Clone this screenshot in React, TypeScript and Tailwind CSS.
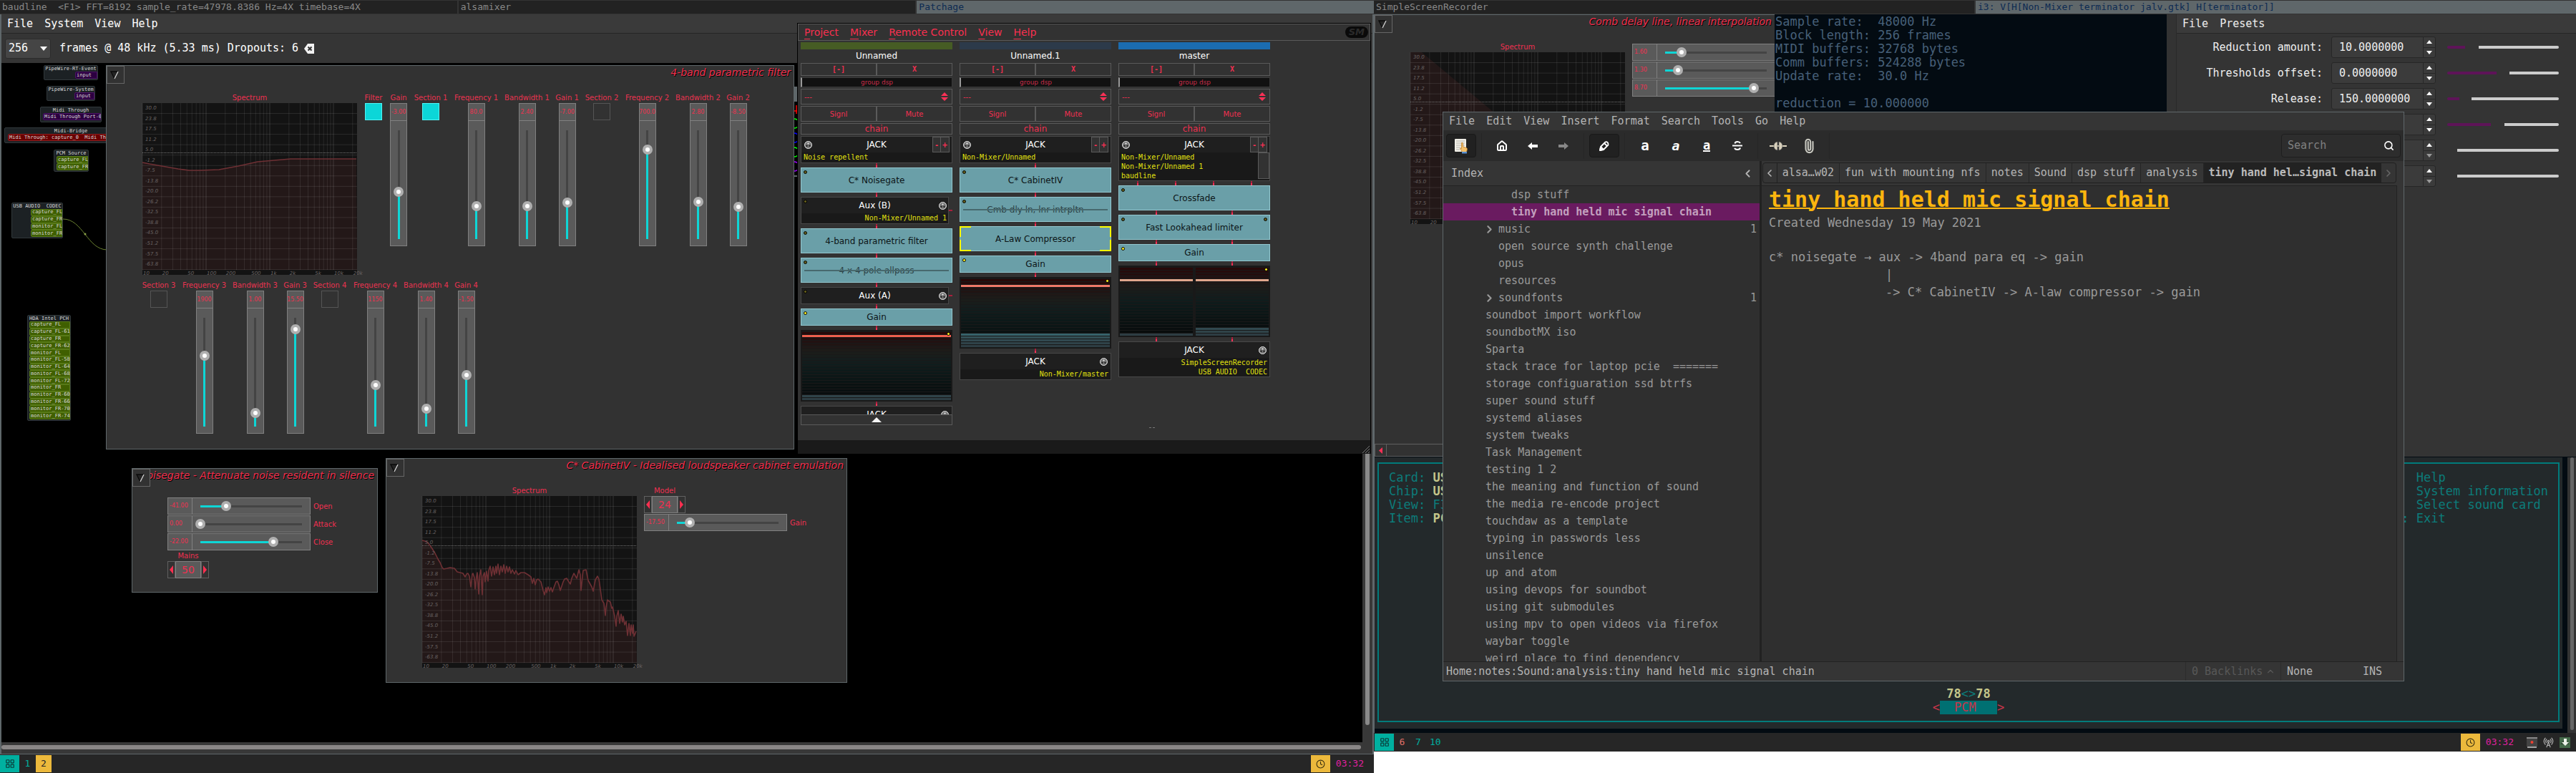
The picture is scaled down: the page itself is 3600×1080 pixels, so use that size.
import React from 'react';
import { Home, Pencil, Paperclip, Search, ChevronLeft, ChevronRight, ChevronUp, Clock, RadioTower, LayoutGrid } from 'lucide-react';

const MONO = "[font-family:'DejaVu_Sans_Mono',monospace]";
const SANS = "[font-family:'DejaVu_Sans',sans-serif]";

/* ---------- shared widgets ---------- */

function TitleTab({ text, active = false, grow }: { text: string; active?: boolean; grow: number }) {
  return (
    <div
      style={{ flexGrow: grow }}
      className={
        'basis-0 overflow-hidden whitespace-pre px-[3px] text-[13px] leading-[18px] ' +
        (active ? 'bg-[#5f676a] text-[#0c2a52]' : 'bg-[#222222] text-[#888888]')
      }
    >
      {text}
    </div>
  );
}

function Corner() {
  return (
    <button aria-label="Window menu" className="relative z-10 flex size-[25px] shrink-0 items-center justify-center border border-[#666666] bg-[#323232] pr-1">
      <svg width="12" height="12" viewBox="0 0 12 12">
        <path d="M1 1H11L6 11Z" fill="#242424" />
        <path d="M11 1H1L6 11" fill="none" stroke="#0a0a0a" strokeWidth="1.3" />
        <path d="M11 1L6 11" stroke="#d8d8d8" strokeWidth="1.3" />
      </svg>
    </button>
  );
}

function PluginHeader({ title }: { title: string }) {
  return (
    <div className="flex h-[25px]">
      <Corner />
      <div className="flex min-w-0 flex-1 justify-end pr-1">
        <h2 className="shrink-0 whitespace-nowrap text-[14px] italic leading-[18px] text-[#f0304e] [text-shadow:1px_1px_0_#000]">{title}</h2>
      </div>
    </div>
  );
}

const THUMB =
  '[&::-webkit-slider-thumb]:box-border [&::-webkit-slider-thumb]:size-[14px] [&::-webkit-slider-thumb]:appearance-none [&::-webkit-slider-thumb]:rounded-full [&::-webkit-slider-thumb]:border-4 [&::-webkit-slider-thumb]:border-[#afafaf] [&::-webkit-slider-thumb]:bg-white';

function HSlider({ value, pos, label, hidden = false }: { value: string; pos: number; label: string; hidden?: boolean }) {
  return (
    <label className="flex items-center gap-1 text-[10px] text-[#f03050]">
      <span className="flex h-6 w-[200px] shrink-0 border border-[#808080] bg-[#5a5a5a]">
        <span className="flex w-[34px] shrink-0 items-center border-r border-[#808080] pl-[2px] text-[8px]">{value}</span>
        <span className="flex flex-1 items-center justify-center">
          <input
            type="range"
            min={0}
            max={100}
            defaultValue={pos}
            style={{ backgroundImage: `linear-gradient(to right,#0ed6d6 ${pos}%,#444 ${pos}%)` }}
            className={'h-[14px] w-[156px] appearance-none bg-[length:142px_3px] bg-center bg-no-repeat ' + THUMB}
          />
        </span>
      </span>
      <span className={hidden ? 'sr-only' : ''}>{label}</span>
    </label>
  );
}

function VSlider({ label, value, pos, width }: { label: string; value: string; pos: number; width: string }) {
  return (
    <label className={'flex shrink-0 flex-col items-center text-[10px] text-[#ea3350] ' + width}>
      <span className="h-[14px] whitespace-nowrap leading-[14px]">{label}</span>
      <span className="flex h-[200px] w-6 flex-col border border-[#808080] bg-[#5a5a5a]">
        <span className="flex h-6 justify-center border-b border-[#808080] text-[8px] leading-[23px]">{value}</span>
        <span className="flex flex-1 items-center justify-center pt-[3px]">
          <input
            type="range"
            min={0}
            max={100}
            defaultValue={pos}
            style={{ backgroundImage: `linear-gradient(to top,#0ed6d6 ${pos}%,#444 ${pos}%)` }}
            className={'h-[166px] w-[14px] appearance-none bg-[length:3px_152px] bg-center bg-no-repeat [direction:rtl] [writing-mode:vertical-lr] ' + THUMB}
          />
        </span>
      </span>
    </label>
  );
}

function Toggle({ label, on = false, width }: { label: string; on?: boolean; width: string }) {
  return (
    <label className={'flex shrink-0 flex-col items-center text-[10px] text-[#ea3350] ' + width}>
      <span className="h-[14px] whitespace-nowrap leading-[14px]">{label}</span>
      <input type="checkbox" defaultChecked={on} className="size-6 appearance-none border border-[#555555] checked:border-[#50f5f5] checked:bg-[#0cd6d8]" />
    </label>
  );
}

function Stepper({ label, value }: { label: string; value: string }) {
  return (
    <div className="flex w-[58px] flex-col items-center text-[10px] text-[#f03050]">
      <span className="leading-[14px]">{label}</span>
      <div className="flex h-6 w-full">
        <button aria-label={label + ' down'} className="flex w-[11px] items-center justify-center border border-[#606060]">
          <svg width="5" height="12" viewBox="0 0 5 12"><path d="M5 0V12L0 6Z" fill="#ff2f50" /></svg>
        </button>
        <input aria-label={label} defaultValue={value} className="w-9 border border-[#808080] bg-[#5a5a5a] text-center text-[14px]" />
        <button aria-label={label + ' up'} className="flex w-[11px] items-center justify-center border border-[#606060]">
          <svg width="5" height="12" viewBox="0 0 5 12"><path d="M0 0V12L5 6Z" fill="#ff2f50" /></svg>
        </button>
      </div>
    </div>
  );
}

const DB = ['30.0', '23.8', '17.5', '11.2', '5.0', '-1.2', '-7.5', '-13.8', '-20.0', '-26.2', '-32.5', '-38.8', '-45.0', '-51.2', '-57.5', '-63.8'];
const HZ: [string, number][] = [['10', 10], ['20', 20], ['50', 50], ['100', 100], ['200', 200], ['500', 500], ['1k', 1000], ['2k', 2000], ['5k', 5000], ['10k', 10000], ['20k', 20000]];
const gx = (hz: number) => Math.log10(hz / 10) * 89;

function Spectrum({ line, stroke = true }: { line: string; stroke?: boolean }) {
  const verticals: number[] = [];
  for (const d of [10, 100, 1000, 10000]) for (let i = 1; i < 10; i++) if (d * i <= 20000) verticals.push(d * i);
  return (
    <figure className="w-[300px] shrink-0">
      <figcaption className="h-[14px] text-center text-[10px] leading-[14px] text-[#f03050]">Spectrum</figcaption>
      <svg width="300" height="240" viewBox="0 0 300 240" className={'overflow-visible ' + SANS}>
        <rect width="300" height="240" fill="#131313" />
        <path d={`M${line} L300,233 L0,233Z`} fill="#231818" />
        {verticals.map((v) => (
          <path key={v} d={`M${gx(v)} 0V233`} stroke="#fff" strokeOpacity={v === 100 || v === 1000 || v === 10000 ? 0.14 : 0.09} />
        ))}
        {DB.map((_, i) => (
          <path key={i} d={`M0 ${(i + 1) * 14.54}H300`} stroke="#fff" strokeOpacity=".1" />
        ))}
        <path d="M0 69.5H300" stroke="#777" strokeDasharray="1 1" />
        {stroke && <path d={`M${line}`} fill="none" stroke="#6e3034" strokeWidth="1.6" strokeLinejoin="round" />}
        <g fill="#6a6464" fontSize="7" fontStyle="italic">
          {DB.map((t, i) => <text key={t} x="4" y={9 + i * 14.54}>{t}</text>)}
          {HZ.map(([t, v]) => <text key={t} x={gx(v) + 1} y="240">{t}</text>)}
        </g>
      </svg>
    </figure>
  );
}

/* ---------- patchage ---------- */

type PortNode = { title: string; ports: string[]; box: string; portBox: string; color: string };

const GREEN = 'bg-[#3f5f00] border-[#587a18]';
const PURPLE = 'bg-[#2c0040] border-[#4c1466]';
const NODES: PortNode[] = [
  { title: 'PipeWire-RT-Event', ports: ['input'], box: 'left-[61px] top-[91px] w-[76px] h-[21px]', portBox: 'ml-[43px] h-[10px]', color: PURPLE },
  { title: 'PipeWire-System', ports: ['input'], box: 'left-[65px] top-[120px] w-[68px] h-[21px]', portBox: 'ml-[38px] h-[10px]', color: PURPLE },
  { title: 'Midi Through', ports: ['Midi Through Port-0'], box: 'left-[56px] top-[149px] w-[86px] h-[22px]', portBox: 'ml-[3px] h-[10px]', color: PURPLE },
  { title: 'Midi-Bridge', ports: ['Midi Through: capture_0  Midi Through: playback_0'], box: 'left-[6px] top-[178px] w-[186px] h-[22px]', portBox: 'ml-1 h-[10px]', color: 'bg-[#6a0000] border-[#8c1c1c]' },
  { title: 'PCM Source', ports: ['capture_FL', 'capture_FR'], box: 'left-[75px] top-[209px] w-[49px] h-[31px]', portBox: 'ml-[3px] h-5', color: GREEN },
  { title: 'USB AUDIO  CODEC', ports: ['capture_FL', 'capture_FR', 'monitor_FL', 'monitor_FR'], box: 'left-[16px] top-[283px] w-[72px] h-[50px]', portBox: 'ml-[26px] h-[39px]', color: GREEN },
  {
    title: 'HDA Intel PCH',
    ports: ['capture_FL', 'capture_FL-61', 'capture_FR', 'capture_FR-62', 'monitor_FL', 'monitor_FL-58', 'monitor_FL-64', 'monitor_FL-68', 'monitor_FL-72', 'monitor_FR', 'monitor_FR-60', 'monitor_FR-66', 'monitor_FR-70', 'monitor_FR-74'],
    box: 'left-[38px] top-[440px] w-[61px] h-[148px]',
    portBox: 'ml-[2px] h-[137px]',
    color: GREEN,
  },
];

function Node({ n }: { n: PortNode }) {
  return (
    <div className={'absolute overflow-hidden rounded-[2px] border border-[#31383b] bg-[#1c2124] text-[7px] text-[#d8d8d8] ' + n.box}>
      <div className="h-2 whitespace-pre text-center leading-[8px]">{n.title}</div>
      <div className={'flex flex-col ' + n.portBox}>
        {n.ports.map((p) => (
          <div key={p} className={'flex flex-1 items-center whitespace-pre rounded-l-[2px] border pl-px leading-[7px] ' + n.color}>{p}</div>
        ))}
      </div>
    </div>
  );
}

function Patchage() {
  return (
    <section className="flex min-h-0 flex-1 flex-col border-x-2 border-b border-[#5f676a] bg-[#353535]">
      <nav className="flex h-[27px] shrink-0 items-center gap-4 border-b border-[#252525] bg-[#3a3a3a] pl-2 text-[15px] text-white">
        {['File', 'System', 'View', 'Help'].map((m) => <button key={m}>{m}</button>)}
      </nav>
      <div className="flex h-[41px] shrink-0 items-center pl-[5px] text-[15px] text-white">
        <div className="relative">
          <select aria-label="Buffer size" className="block h-7 w-16 appearance-none rounded-[3px] border border-[#2c2c2c] bg-[#454545] pl-1">
            <option>256</option>
          </select>
          <svg className="pointer-events-none absolute right-[5px] top-[11px]" width="10" height="6"><path d="M0 0H10L5 6Z" fill="#fff" /></svg>
        </div>
        <span className="ml-3">frames @ 48 kHz (5.33 ms) Dropouts: 6</span>
        <button aria-label="Clear dropouts" className="ml-2">
          <svg width="14" height="14" viewBox="0 0 14 14"><path d="M5 0H14V14H5L0 7Z" fill="#f2f2f2" /><path d="M5.500 4.500L10.500 9.500M10.500 4.500L5.500 9.500" stroke="#333" strokeWidth="2" /></svg>
        </button>
      </div>
      <div className="flex min-h-0 flex-1">
        <div className="flex-1 bg-black" />
        <div className="flex w-[14px] justify-center bg-[#383838] pb-6"><div className="w-[6px] rounded-full bg-[#8a8a8a]" /></div>
      </div>
      <div className="flex h-4 shrink-0 flex-col bg-[#383838] pr-4 pt-1"><div className="h-[6px] rounded-full bg-[#8a8787]" /></div>
    </section>
  );
}

/* ---------- non mixer ---------- */

function Links({ n }: { n: number }) {
  return (
    <div className="flex h-[6px] shrink-0 justify-around">
      {Array.from({ length: n }, (_, i) => <span key={i} className="w-[2px] border-t-[3px] border-[#a8203c] bg-[#ff3056]" />)}
    </div>
  );
}

function Jackplug() {
  return (
    <svg width="11" height="11" viewBox="0 0 11 11" className="block shrink-0">
      <circle cx="5.500" cy="5.500" r="5" fill="#777" stroke="#e8e8e8" />
      <circle cx="5.500" cy="3.500" r="1.100" fill="#eee" />
      <circle cx="3.500" cy="6.800" r="1.200" fill="#222" />
      <circle cx="7.500" cy="6.800" r="1.200" fill="#222" />
    </svg>
  );
}

function Led({ on = false, side = 'left' }: { on?: boolean; side?: 'left' | 'right' }) {
  return <i className={'absolute top-[3px] size-[5px] rounded-full border border-black ' + (side === 'left' ? 'left-[3px] ' : 'right-[3px] ') + (on ? 'bg-[#ffee20]' : 'bg-[#66601c]')} />;
}

function Jack({ lines, input = false, scroll = false }: { lines: string[]; input?: boolean; scroll?: boolean }) {
  return (
    <div className="relative min-h-[38px] shrink-0 border border-[#484848] bg-[#191919]">
      <div className="relative flex h-[22px] items-center justify-center bg-[#1f1f1f] text-[12px] text-white">
        {input ? (
          <>
            <span className="absolute left-1"><Jackplug /></span>
            <span className="absolute right-[3px] flex font-bold text-[#ff3056]">
              <button className="h-[22px] w-3 border border-[#5a5a5a] bg-[#323232] text-[10px]">-</button>
              <button className="h-[22px] w-3 border border-l-0 border-[#5a5a5a] bg-[#323232] text-[10px]">+</button>
            </span>
          </>
        ) : (
          <span className="absolute right-1"><Jackplug /></span>
        )}
        JACK
      </div>
      <div className={'flex ' + MONO}>
        <div className={'flex-1 whitespace-pre px-[3px] text-[10px] leading-[13px] text-[#e0e010] ' + (input ? '' : 'text-right')}>
          {lines.map((l) => <div key={l}>{l}</div>)}
        </div>
        {scroll && <div className="h-[37px] w-4 border border-[#5a5a5a] bg-[#323232]" />}
      </div>
    </div>
  );
}

function Aux({ name, line }: { name: string; line?: string }) {
  return (
    <div className="flex items-center">
      <div className={'relative w-[207px] shrink-0 border border-[#484848] bg-[#191919] ' + (line ? 'h-[38px]' : 'h-6')}>
        <div className="flex h-[22px] items-center justify-center bg-[#1f1f1f] text-[12px] text-white">{name}</div>
        <Led />
        <span className="absolute right-[2px] top-[6px]"><Jackplug /></span>
        {line && <div className={'pr-[2px] text-right text-[10px] leading-[13px] text-[#e0e010] ' + MONO}>{line}</div>}
      </div>
      <span className="h-[2px] flex-1 bg-[#a8203c]" />
    </div>
  );
}

function Mod({ name, short = false, on = false, bypass = false, selected = false, both = false }: { name: string; short?: boolean; on?: boolean; bypass?: boolean; selected?: boolean; both?: boolean }) {
  return (
    <div className={'relative flex shrink-0 items-center justify-center border border-[#93c8d0] bg-[#6a9fa8] text-[12px] ' + (short ? 'h-6 ' : 'h-[35px] ') + (bypass ? 'text-[#2c4246]' : 'text-[#0c1416]')}>
      {!selected && <Led on={on} />}
      {both && <Led side="right" />}
      {name}
      {bypass && <span className="absolute inset-x-1 top-4 h-[2px] bg-[#47696e]" />}
      {selected && (
        <>
          <i className="absolute -left-px -top-px h-[15px] w-4 border-l-2 border-t-2 border-[#ffff00]" />
          <i className="absolute -right-px -top-px h-[15px] w-4 border-r-2 border-t-2 border-[#ffff00]" />
          <i className="absolute -bottom-px -left-px h-4 w-4 border-b-2 border-l-2 border-[#ffff00]" />
          <i className="absolute -bottom-px -right-px h-4 w-4 border-b-2 border-r-2 border-[#ffff00]" />
        </>
      )}
    </div>
  );
}

const SEG = ['#280909', '#260b0b', '#240d0d', '#221111', '#201413', '#1f1816', '#1e1b18', '#1b1d1a', '#181d1b', '#151d1d', '#121d1d', '#101d1d', '#0e1b1b', '#0d1a1a', '#0c1919', '#0c1717', '#0b1616', '#0a1414', '#0a1212', '#091111', '#090f10', '#080d0e', '#080c0c', '#070a0a'];
const LIT = ['#2d3d43', '#2f4349', '#314950', '#335056', '#36626a'];

function Meter({ bars, peak, color }: { bars: number[]; peak: number; color: string }) {
  return (
    <div className="relative flex h-[100px] shrink-0 gap-1 bg-[#191919] px-[2px] pb-[1px] pt-[3px]">
      {bars.map((lit, b) => (
        <div key={b} className="flex flex-1 flex-col gap-px">
          {SEG.map((c, i) => (
            <span key={i} className="h-[3px]" style={{ backgroundColor: i === peak ? color : i >= 24 - lit ? LIT[23 - i] : c }} />
          ))}
        </div>
      ))}
      <Led on side="right" />
    </div>
  );
}

function Strip({ name, color, children }: { name: string; color: string; children: React.ReactNode }) {
  return (
    <div className="w-[212px] shrink-0 text-[#f03050]">
      <div className={'h-[10px] ' + color} />
      <div className="h-[19px] text-center text-[12px] leading-[19px] text-white">{name}</div>
      <div className={'flex text-[10px] font-bold leading-[16px] ' + MONO}>
        <button className="h-[18px] flex-1 border border-[#5a5a5a]">[-]</button>
        <button className="h-[18px] flex-1 border border-[#5a5a5a]">X</button>
      </div>
      <div className="mt-[2px] h-[14px] border border-l-2 border-[#3a3a3a] border-l-[#999999] bg-[#111111] text-center text-[9px] leading-[12px] text-[#c82c48]">group dsp</div>
      <div className="relative mt-[2px]">
        <select aria-label={name + ' group'} className="block h-[22px] w-full appearance-none border border-[#5a5a5a] bg-[#323232] pl-1 text-[10px]">
          <option>---</option>
        </select>
        <svg className="pointer-events-none absolute right-[6px] top-[5px]" width="10" height="12"><path d="M0 5L5 0L10 5ZM0 7L5 12L10 7Z" fill="#ff3056" /></svg>
      </div>
      <div className="mt-[2px] flex text-[10px]">
        <button className="h-[22px] flex-1 border border-[#5a5a5a]">Signl</button>
        <button className="h-[22px] flex-1 border border-[#5a5a5a]">Mute</button>
      </div>
      <button className="mb-[2px] mt-[2px] block h-4 w-full border border-[#5a5a5a] text-[12px] leading-[14px]">chain</button>
      {children}
    </div>
  );
}

function NonMixer() {
  return (
    <section className={'absolute left-[1114px] right-[4px] top-[32px] flex h-[602px] flex-col border border-b-0 border-black bg-[#323232] ' + SANS}>
      <nav className="flex h-6 shrink-0 items-center gap-4 border border-[#5a5a5a] pl-2 pr-[2px] text-[14px] text-[#f8304f]">
        {['Project', 'Mixer', 'Remote Control', 'View', 'Help'].map((m) => (
          <button key={m}><u className="underline-offset-4">{m[0]}</u>{m.slice(1)}</button>
        ))}
        <span className="ml-auto rounded-full bg-[#0a0a0a] px-[5px] text-[13px] font-bold italic leading-4 text-[#2b2b2b]">SM</span>
      </nav>
      <div className="flex min-h-0 flex-1 gap-[10px] pl-1 pt-[2px]">
        <Strip name="Unnamed" color="bg-[#465c24]">
          <Jack input lines={['Noise repellent']} />
          <Links n={1} />
          <Mod name="C* Noisegate" />
          <Links n={1} />
          <Aux name="Aux (B)" line="Non-Mixer/Unnamed 1" />
          <Links n={1} />
          <Mod name="4-band parametric filter" />
          <Links n={1} />
          <Mod name="4 x 4 pole allpass" bypass />
          <Links n={1} />
          <Aux name="Aux (A)" />
          <Links n={1} />
          <Mod name="Gain" short on />
          <Links n={1} />
          <Meter bars={[2]} peak={1} color="#f0604e" />
          <Links n={1} />
          <div className="h-3 overflow-hidden"><Jack lines={['Non-Mixer/master']} /></div>
          <button aria-label="Scroll up" className="flex h-[15px] w-full items-center justify-center border border-[#5a5a5a]">
            <svg width="14" height="7"><path d="M0 7H14L7 0Z" fill="#f4f4f4" /></svg>
          </button>
        </Strip>
        <Strip name="Unnamed.1" color="bg-[#2c3a4a]">
          <Jack input lines={['Non-Mixer/Unnamed']} />
          <Links n={1} />
          <Mod name="C* CabinetIV" />
          <Links n={1} />
          <Mod name="Cmb dly ln, lnr intrpltn" bypass />
          <Links n={1} />
          <Mod name="A-Law Compressor" selected />
          <Links n={1} />
          <Mod name="Gain" short on />
          <Links n={1} />
          <Meter bars={[5]} peak={2} color="#f07868" />
          <Links n={1} />
          <Jack lines={['Non-Mixer/master']} />
        </Strip>
        <Strip name="master" color="bg-[#1b6cb0]">
          <Jack input scroll lines={['Non-Mixer/Unnamed', 'Non-Mixer/Unnamed 1', 'baudline']} />
          <Links n={4} />
          <Mod name="Crossfade" />
          <Links n={2} />
          <Mod name="Fast Lookahead limiter" both />
          <Links n={2} />
          <Mod name="Gain" short on />
          <Links n={2} />
          <Meter bars={[1, 3]} peak={4} color="#e0a68c" />
          <Links n={2} />
          <Jack lines={['SimpleScreenRecorder', 'USB AUDIO  CODEC']} />
        </Strip>
      </div>
      <div className="flex h-[19px] shrink-0 items-end justify-end bg-[#1a1a1a] p-px">
        <svg width="10" height="10"><path d="M0 10L10 0M4 10L10 4M8 10L10 8" stroke="#777" /></svg>
      </div>
      <i className="absolute bottom-9 left-[491px] h-px w-2 border-x-[3px] border-[#777777]" />
    </section>
  );
}

/* ---------- left plugin windows ---------- */

function ParametricWindow() {
  return (
    <section className={'absolute left-[148px] top-[91px] h-[537px] w-[962px] border border-[#5f676a] bg-[#323232] ' + SANS}>
      <PluginHeader title="4-band parametric filter" />
      <div className="mt-[13px] flex gap-[10px] pl-[50px]">
        <Spectrum line="0,83 10,85 27,88 50,92 65,94 80,94 107,93 134,88 161,82 184,80 207,78 230,78 299,78" />
        <div className="flex gap-[10px]">
          <Toggle label="Filter" on width="w-[26px]" />
          <VSlider label="Gain" value="-3.00" pos={43} width="w-6" />
          <Toggle label="Section 1" on width="w-[46px]" />
          <VSlider label="Frequency 1" value="80.0" pos={30} width="w-[61px]" />
          <VSlider label="Bandwidth 1" value="2.40" pos={30} width="w-[61px]" />
          <VSlider label="Gain 1" value="-7.00" pos={33} width="w-[31px]" />
          <Toggle label="Section 2" width="w-[46px]" />
          <VSlider label="Frequency 2" value="700.0" pos={82} width="w-[61px]" />
          <VSlider label="Bandwidth 2" value="2.80" pos={34} width="w-[61px]" />
          <VSlider label="Gain 2" value="-8.50" pos={29} width="w-[31px]" />
        </div>
      </div>
      <div className="mt-2 flex gap-[10px] pl-[50px]">
        <Toggle label="Section 3" width="w-[46px]" />
        <VSlider label="Frequency 3" value="1900" pos={65} width="w-[61px]" />
        <VSlider label="Bandwidth 3" value="1.00" pos={12} width="w-[61px]" />
        <VSlider label="Gain 3" value="15.50" pos={89} width="w-[31px]" />
        <Toggle label="Section 4" width="w-[46px]" />
        <VSlider label="Frequency 4" value="1150" pos={38} width="w-[61px]" />
        <VSlider label="Bandwidth 4" value="1.40" pos={16} width="w-[61px]" />
        <VSlider label="Gain 4" value="-1.50" pos={47} width="w-[31px]" />
      </div>
    </section>
  );
}

function NoisegateWindow() {
  return (
    <section className={'absolute left-[184px] top-[654px] h-[174px] w-[344px] overflow-hidden border border-[#5f676a] bg-[#323232] ' + SANS}>
      <PluginHeader title="C* Noisegate - Attenuate noise resident in silence" />
      <div className="mt-[15px] flex flex-col gap-px pl-[49px]">
        <HSlider value="-41.00" pos={25} label="Open" />
        <HSlider value="0.00" pos={0} label="Attack" />
        <HSlider value="-22.00" pos={72} label="Close" />
        <Stepper label="Mains" value="50" />
      </div>
    </section>
  );
}

const CAB =
  '0,62 4,63 8,65 13,72 18,80 22,88 25,93 28,100 30,102 35,101 39,100 45,101 49,106 53,107 57,108 60,113 62,109 64,108 66,112 68,127 70,109 71,108 73,114 74,130 76,112 77,107 79,137 80,112 82,103 84,138 85,112 87,107 88,120 90,105 92,119 93,104 95,98 97,112 99,99 101,110 103,98 104,108 106,95 108,110 110,98 112,106 114,96 116,108 118,98 120,106 122,99 124,108 126,103 129,109 131,104 134,110 138,107 143,107 148,110 152,113 154,122 156,115 158,124 160,117 162,116 166,120 169,132 171,138 173,128 174,135 176,127 178,133 180,128 182,134 184,128 187,120 189,119 191,124 193,132 195,126 197,120 199,116 202,115 205,120 207,123 209,115 212,108 216,115 219,103 221,110 222,132 224,112 225,104 229,103 232,118 237,127 239,133 242,117 245,112 247,116 249,130 251,145 254,150 256,167 257,155 259,145 261,147 263,148 265,157 266,155 269,168 271,182 272,168 274,160 276,178 278,165 280,176 281,168 283,180 285,175 287,195 289,178 291,195 292,180 294,192 295,180 296,196 299,189';

function CabinetWindow() {
  return (
    <section className={'absolute left-[539px] top-[640px] h-[314px] w-[645px] border border-[#5f676a] bg-[#323232] ' + SANS}>
      <PluginHeader title="C* CabinetIV - Idealised loudspeaker cabinet emulation" />
      <div className="mt-[13px] flex gap-[10px] pl-[50px]">
        <Spectrum line={CAB} />
        <div className="flex flex-col gap-px">
          <Stepper label="Model" value="24" />
          <HSlider value="-17.50" pos={13} label="Gain" />
        </div>
      </div>
    </section>
  );
}

function BaudlineWindow() {
  return (
    <section aria-label="baudline" className="absolute left-[1000px] top-[121px] h-[126px] w-[114px] border-b-2 border-[#5f676a] bg-black">
      <div className="h-[21px] bg-[#5f676a]" />
      <svg className="ml-auto" width="12" height="102" viewBox="0 0 12 102" fill="none" strokeWidth="1.500">
        <path d="M11 5V17M7 13H12" stroke="#f00" />
        <path d="M8 24A6 6 0 0 1 8 37" stroke="#0f0" />
        <path d="M8 44A6 6 0 0 1 8 57" stroke="#00f" />
        <path d="M8 64A6 6 0 0 1 8 77" stroke="#0f0" />
        <path d="M8 84A6 6 0 0 1 8 97" stroke="#a000ff" />
      </svg>
    </section>
  );
}

function GridBadge() {
  return <span className="flex h-6 w-[27px] items-center justify-center bg-[#00b0a0] text-[#0b3a38]"><LayoutGrid size={14} strokeWidth={2} /></span>;
}

function ClockBadge() {
  return (
    <>
      <span className="flex h-6 w-[27px] items-center justify-center bg-[#ecb93c] text-[#3a3010]"><Clock size={13} /></span>
      <span className="ml-2 text-[#e020a0]">03:32</span>
    </>
  );
}

function LeftMonitor() {
  return (
    <div className="relative flex h-screen min-w-0 flex-col overflow-hidden bg-black">
      <header className="flex h-5 shrink-0 gap-[2px] bg-[#333333] py-px">
        <TitleTab grow={1} text="baudline  <F1> FFT=8192 sample_rate=47978.8386 Hz=4X timebase=4X" />
        <TitleTab grow={1} text="alsamixer" />
        <TitleTab grow={1} text="Patchage" active />
      </header>
      <Patchage />
      <footer className="flex h-[26px] shrink-0 items-center bg-[#262626] text-[13px] text-[#00b0a0]">
        <GridBadge />
        <button className="w-[23px]">1</button>
        <button className="h-6 w-[22px] bg-[#ecb93c] text-[#262626]">2</button>
        <span className="ml-auto flex items-center pr-[14px]"><ClockBadge /></span>
      </footer>
      {NODES.map((n) => <Node key={n.title} n={n} />)}
      <svg className="absolute left-[88px] top-[300px]" width="60" height="52" fill="none">
        <path d="M0 6C28 6 34 49 62 49" stroke="#6a8030" />
        <circle cx="31" cy="27" r="1.500" fill="#8aa048" />
      </svg>
      <BaudlineWindow />
      <ParametricWindow />
      <NonMixer />
      <NoisegateWindow />
      <CabinetWindow />
    </div>
  );
}

/* ---------- right monitor ---------- */

function CombPane() {
  return (
    <section className={'flex w-[560px] shrink-0 flex-col overflow-hidden border-l border-t border-[#5f676a] bg-[#323232] ' + SANS}>
      <PluginHeader title="Comb delay line, linear interpolation" />
      <div className="mt-[13px] flex flex-1 gap-[10px] pl-[50px]">
        <Spectrum stroke={false} line="0,0 16,0 285,224" />
        <div className="flex flex-col gap-px pt-[2px]">
          <HSlider value="1.60" pos={16} label="Delay time" hidden />
          <HSlider value="1.30" pos={13} label="Delay offset" hidden />
          <HSlider value="8.70" pos={87} label="Decay" hidden />
        </div>
      </div>
      <div className="flex h-[18px] shrink-0 border border-[#606060]">
        <button aria-label="Scroll left" className="flex w-4 items-center justify-center border-r border-[#606060]">
          <svg width="5" height="9"><path d="M5 0V9L0 4.500Z" fill="#ff3056" /></svg>
        </button>
      </div>
    </section>
  );
}

const PARAMS = [
  { label: 'Reduction amount:', value: '10.0000000', a: 16, b: 28 },
  { label: 'Thresholds offset:', value: '0.0000000', a: 44, b: 56 },
  { label: 'Release:', value: '150.0000000', a: 11, b: 22 },
  { label: 'Residual listen:', value: '', a: 39, b: 51 },
  { label: 'Makeup:', value: '', a: 0, b: 9 },
  { label: 'Enable:', value: '', a: 0, b: 9 },
];

function GtkPane() {
  return (
    <section className="flex min-w-0 flex-1 flex-col border-l border-[#2a2a2a] bg-[#343434] text-[15px] text-[#eeeeee]">
      <nav className="flex h-[27px] shrink-0 items-center gap-4 border-b border-[#262626] bg-[#3a3a3a] pl-2">
        <button>File</button>
        <button>Presets</button>
      </nav>
      <div className="flex flex-col gap-[6px] pr-6 pt-1">
        {PARAMS.map((p) => (
          <label key={p.label} className="flex h-[30px] items-center">
            <span className="w-[204px] shrink-0 text-right">{p.label}</span>
            <span className="ml-3 flex h-[30px] w-[146px] shrink-0 overflow-hidden rounded-[3px] border border-[#272727] bg-[#3b3b3b]">
              <input defaultValue={p.value} className="min-w-0 flex-1 pl-[10px]" />
              <span className="flex w-[17px] flex-col border-l border-[#272727]">
                <button aria-label="Increase" className="flex flex-1 items-center justify-center border-b border-[#272727]"><svg width="8" height="5"><path d="M0 5H8L4 0Z" fill="#fff" /></svg></button>
                <button aria-label="Decrease" className="flex flex-1 items-center justify-center"><svg width="8" height="5"><path d="M0 0H8L4 5Z" fill={p.a ? '#fff' : '#999'} /></svg></button>
              </span>
            </span>
            <input
              type="range"
              aria-label={p.label}
              defaultValue={p.a}
              style={{ backgroundImage: `linear-gradient(to right,#5e1458 ${p.a}%,transparent ${p.a}%,transparent ${p.b}%,#cccccc ${p.b}%)` }}
              className="ml-4 h-1 min-w-0 flex-1 appearance-none rounded-full [&::-webkit-slider-thumb]:size-4 [&::-webkit-slider-thumb]:appearance-none"
            />
          </label>
        ))}
      </div>
    </section>
  );
}

function Alsamixer() {
  return (
    <section className="flex min-h-0 flex-1 border-l border-[#5f676a] bg-[#030b12] pt-px text-[17px] leading-[19px] text-[#0c7c7a]">
      <div className="mb-[6px] mr-[7px] flex flex-1 bg-[#23292b] pb-[9px] pl-1 pr-1 pt-[7px]">
        <div className="flex flex-1 flex-col justify-between border-2 border-[#007b7b] pb-[9px] pl-[14px] pr-[14px] pt-[10px]">
          <div className="flex justify-between whitespace-pre">
            <pre className={MONO}>
              {'Card: '}<b className="text-[#c5c68a]">USB AUDIO  CODEC</b>{'\nChip: '}<b className="text-[#c5c68a]">USB Mixer</b>{'\nView: F3:[Playback] F4: Capture\nItem: '}<b className="text-[#c5c68a]">PCM</b>
            </pre>
            <pre className={MONO}>{'F1:  Help\nF2:  System information\nF6:  Select sound card\nEsc: Exit'}</pre>
          </div>
          <div className="flex flex-col items-center whitespace-pre">
            <div><b className="text-[#c5c68a]">78</b>{'<>'}<b className="text-[#c5c68a]">78</b></div>
            <div className="text-[#c8354a]">{'<'}<span className="inline-block w-20 bg-[#007072] pl-5">PCM</span>{'>'}</div>
          </div>
        </div>
      </div>
      <div className="flex w-3 justify-center bg-[#333333] pb-1"><div className="w-[5px] rounded-full bg-[#666666]" /></div>
    </section>
  );
}

const TREE: [string, number, string?][] = [
  ['dsp stuff', 2], ['tiny hand held mic signal chain', 3], ['music', 1, '1'], ['open source synth challenge', 1], ['opus', 1], ['resources', 1], ['soundfonts', 1, '1'],
  ['soundbot import workflow', 0], ['soundbotMX iso', 0], ['Sparta', 0], ['stack trace for laptop pcie  =======', 0], ['storage configuaration ssd btrfs', 0], ['super sound stuff', 0],
  ['systemd aliases', 0], ['system tweaks', 0], ['Task Management', 0], ['testing 1 2', 0], ['the meaning and function of sound', 0], ['the media re-encode project', 0],
  ['touchdaw as a template', 0], ['typing in passwords less', 0], ['unsilence', 0], ['up and atom', 0], ['using devops for soundbot', 0], ['using git submodules', 0],
  ['using mpv to open videos via firefox', 0], ['waybar toggle', 0], ['weird place to find dependency', 0],
];
const INDENT = ['pl-[59px]', 'pl-[77px]', 'pl-[95px]', 'pl-[95px] bg-[#6a1b60] font-bold text-[#c3a0be]'];

function Tool({ label, active = false, children }: { label: string; active?: boolean; children: React.ReactNode }) {
  return (
    <button aria-label={label} className={'flex h-[33px] w-[42px] shrink-0 items-center justify-center rounded-[4px] text-white ' + (active ? 'border border-[#191919] bg-[#212121]' : '')}>
      {children}
    </button>
  );
}

function Sep() {
  return <span className="mx-[6px] h-9 w-px shrink-0 bg-[#262626]" />;
}

function Zim() {
  return (
    <section className="absolute left-[96px] right-[240px] top-[156px] flex h-[796px] flex-col border border-[#5f676a] bg-[#353535] text-[15px] text-[#b4b4b4]">
      <nav className="flex h-[25px] shrink-0 items-center gap-4 pl-2">
        {['File', 'Edit', 'View', 'Insert', 'Format', 'Search', 'Tools', 'Go', 'Help'].map((m) => <button key={m}>{m}</button>)}
      </nav>
      <div className="flex h-[43px] shrink-0 items-center gap-px bg-[#2b2b2b] pl-1 pr-1">
        <Tool label="Edit mode" active>
          <svg width="20" height="22" viewBox="0 0 20 22">
            <rect x="1" y="1" width="16" height="18" rx="1" fill="#f0eee6" />
            <path d="M3 4H15M3 7H15M3 10H15M3 13H9M3 16H8" stroke="#b8b6ae" />
            <path d="M11 6q1.500 0 1.500 2v4l5 1.500q1 .5 1 2l-1 4h-6l-3-5q0-1.500 2 0V8q0-2 .5-2" fill="#f5c06a" stroke="#b87820" strokeWidth=".7" />
            <rect x="11" y="19" width="7" height="2.500" fill="#5a90d0" />
          </svg>
        </Tool>
        <Sep />
        <Tool label="Home"><Home size={16} strokeWidth={3} /></Tool>
        <Tool label="Back"><svg width="14" height="10"><path d="M0 5L6 0V3H14V7H6V10Z" fill="#fff" /></svg></Tool>
        <Tool label="Forward"><svg width="14" height="10"><path d="M14 5L8 0V3H0V7H8V10Z" fill="#888" /></svg></Tool>
        <Sep />
        <Tool label="Edit" active>
          <svg width="16" height="16" viewBox="0 0 16 16" fill="none" stroke="#fff" strokeWidth="1.800" strokeLinejoin="round">
            <path d="M2 14L3 9L9.500 2.500Q11 1.500 12.500 3T13.500 6.500L7 13Z" />
            <path d="M8 4L12 8M3 9L7 13" />
            <path d="M2 14L2.600 11L5 13.400Z" fill="#fff" />
          </svg>
        </Tool>
        <Sep />
        <Tool label="Strong"><b className="text-[19px] leading-none">a</b></Tool>
        <Tool label="Emphasis"><b className="text-[18px] italic leading-none">a</b></Tool>
        <Tool label="Mark"><b className="border-b-2 border-white text-[17px] leading-[14px]">a</b></Tool>
        <Tool label="Strike">
          <svg width="14" height="13" viewBox="0 0 14 13" fill="none" stroke="#fff" strokeWidth="2">
            <path d="M11 3Q10 1 7 1Q4 1 3.500 3.500M11 9.500Q10.500 12 7 12Q4 12 3 10" />
            <path d="M0 6.500H14" />
          </svg>
        </Tool>
        <Sep />
        <Tool label="Link">
          <svg width="24" height="14" viewBox="0 0 24 14">
            <path d="M0 7H24" stroke="#ddd5c0" strokeWidth="2" />
            <path d="M11 1V13Q6 12 6 7T11 1ZM13 1V13Q18 12 18 7T13 1Z" fill="#d8d0bc" stroke="#555" strokeWidth=".6" />
          </svg>
        </Tool>
        <Tool label="Attach"><Paperclip size={20} strokeWidth={2.5} className="-rotate-45 text-[#c8c8c0]" /></Tool>
        <Sep />
        <label className="ml-auto flex h-[33px] w-[167px] items-center rounded-[4px] border border-[#1e1e1e] bg-[#2d2d2d] px-2">
          <input placeholder="Search" aria-label="Search" className="min-w-0 flex-1 placeholder:text-[#808080]" />
          <Search size={15} strokeWidth={2.5} className="shrink-0 text-white" />
        </label>
      </div>
      <div className="flex min-h-0 flex-1">
        <aside className="flex w-[442px] shrink-0 flex-col">
          <div className="flex h-[35px] shrink-0 items-center justify-between border-b border-[#222222] pl-[11px] pr-2">
            Index <ChevronLeft size={17} strokeWidth={2.5} />
          </div>
          <ul className="min-h-0 flex-1 overflow-hidden bg-[#2f2f2f] text-[#999999]">
            {TREE.map(([t, d, n]) => (
              <li key={t} className={'relative flex h-6 items-center justify-between whitespace-pre pr-1 ' + INDENT[d]}>
                {n && <ChevronRight size={17} strokeWidth={3} className="absolute left-[56px]" />}
                <span>{t}</span>
                {n && <span>{n}</span>}
              </li>
            ))}
          </ul>
        </aside>
        <div className="w-[3px] shrink-0 bg-[#212121]" />
        <main className="flex min-w-0 flex-1 flex-col pr-[9px]">
          <nav className="mb-[3px] ml-px mr-px mt-[2px] flex h-[29px] shrink-0 items-stretch whitespace-nowrap rounded-[4px] border border-[#202020]">
            <button aria-label="Previous" className="flex w-[21px] items-center justify-center border-r border-[#202020]"><ChevronLeft size={16} strokeWidth={2.5} /></button>
            {['alsa…w02', 'fun with mounting nfs', 'notes', 'Sound', 'dsp stuff', 'analysis'].map((t) => (
              <button key={t} className="border-r border-[#262626] px-[7px]">{t}</button>
            ))}
            <button className="flex-1 bg-[#222222] px-[7px] font-bold text-[#bbbbbb]">tiny hand hel…signal chain</button>
            <button aria-label="Next" className="flex w-[21px] items-center justify-center text-[#666666]"><ChevronRight size={16} strokeWidth={2.5} /></button>
          </nav>
          <article className="min-h-0 flex-1 overflow-hidden border-r border-t border-[#222222] bg-[#2f2f2f] pl-[10px] text-[17px] leading-6 text-[#999999]">
            <h1 className="mb-[2px] mt-px whitespace-nowrap text-[30px] font-bold leading-9 text-[#fcb50e] underline decoration-2">tiny hand held mic signal chain</h1>
            <p>Created Wednesday 19 May 2021</p>
            <p className="mt-6">{'c* noisegate → aux -> 4band para eq -> gain'}</p>
            <p className="mt-px pl-[163px]">|</p>
            <p className="pl-[163px]">{'-> C* CabinetIV -> A-law compressor -> gain'}</p>
          </article>
        </main>
      </div>
      <footer className="flex h-[27px] shrink-0 items-center border-t border-[#222222] pl-1">
        <span>Home:notes:Sound:analysis:tiny hand held mic signal chain</span>
        <span className="ml-auto flex h-full w-[134px] items-center border-x border-[#2c2c2c] pl-2 text-[#585858]">0 Backlinks<ChevronUp size={14} className="ml-1" /></span>
        <span className="w-[114px] pl-2">None</span>
        <span className="w-[57px]">INS</span>
      </footer>
    </section>
  );
}

function RightMonitor() {
  return (
    <div className="relative flex h-screen min-w-0 flex-col overflow-hidden bg-white pb-[30px]">
      <header className="flex h-5 shrink-0 gap-[2px] bg-[#333333] py-px">
        <TitleTab grow={1} text="SimpleScreenRecorder" />
        <TitleTab grow={1} text="i3: V[H[Non-Mixer terminator jalv.gtk] H[terminator]]" active />
      </header>
      <div className="flex h-[618px] shrink-0 bg-[#333333]">
        <CombPane />
        <pre className={'mr-[13px] w-[548px] shrink-0 bg-[#030b12] pl-px pt-px text-[17px] leading-[19px] text-[#476079] ' + MONO}>
          {'Sample rate:  48000 Hz\nBlock length: 256 frames\nMIDI buffers: 32768 bytes\nComm buffers: 524288 bytes\nUpdate rate:  30.0 Hz\n\nreduction = 10.000000'}
        </pre>
        <GtkPane />
      </div>
      <Alsamixer />
      <footer className="flex h-[26px] shrink-0 items-center bg-[#262626] pl-px text-[13px] text-[#00b0a0]">
        <GridBadge />
        <button className="w-[23px] text-[#e07068]">6</button>
        <button className="w-[22px]">7</button>
        <button className="ml-[5px]">10</button>
        <span className="ml-auto flex items-center pr-2">
          <ClockBadge />
          <span className="ml-[18px] flex items-center gap-2 text-[#aaaaaa]">
            <svg width="15" height="15"><rect width="15" height="2" fill="#888" /><rect y="2" width="15" height="11" fill="#444" /><circle cx="7.500" cy="7" r="2" fill="#f04030" /><path d="M1 14H14" stroke="#ccc" strokeWidth="1.500" /></svg>
            <RadioTower size={15} />
            <svg width="15" height="15"><rect width="15" height="15" fill="#456a4a" /><path d="M1 10L7 3L14 10" fill="#2d4630" /><path d="M6 2H10V7H13L8 12L3 7H6Z" fill="#eef4ea" /></svg>
          </span>
        </span>
      </footer>
      <Zim />
    </div>
  );
}

export default function App() {
  return (
    <div className={'grid w-full grid-cols-[1920fr_1680fr] ' + MONO}>
      <LeftMonitor />
      <RightMonitor />
    </div>
  );
}
